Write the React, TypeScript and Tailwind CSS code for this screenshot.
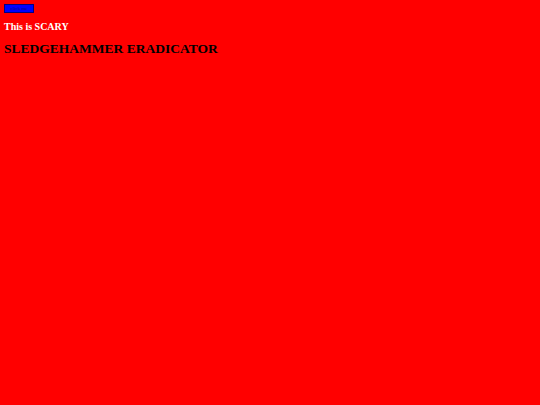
export default function App() {
  return (
    <div className="w-[540px] h-[405px] bg-[#ff0000] overflow-hidden pt-[4px] pl-[4px]" style={{ fontFamily: '"Liberation Serif", serif' }}>
      <button className="block w-[30px] h-[9px] bg-[#0000ff] border border-[#000080] text-[5px] leading-[7px] text-[#000080] p-0 overflow-hidden whitespace-nowrap">click me</button>
      <h3 className="mt-[8px] text-[10px] font-bold text-white leading-[12px]">This is SCARY</h3>
      <h2 className="mt-[8px] text-[13.5px] font-bold text-black leading-[16px]">SLEDGEHAMMER ERADICATOR</h2>
    </div>
  );
}
